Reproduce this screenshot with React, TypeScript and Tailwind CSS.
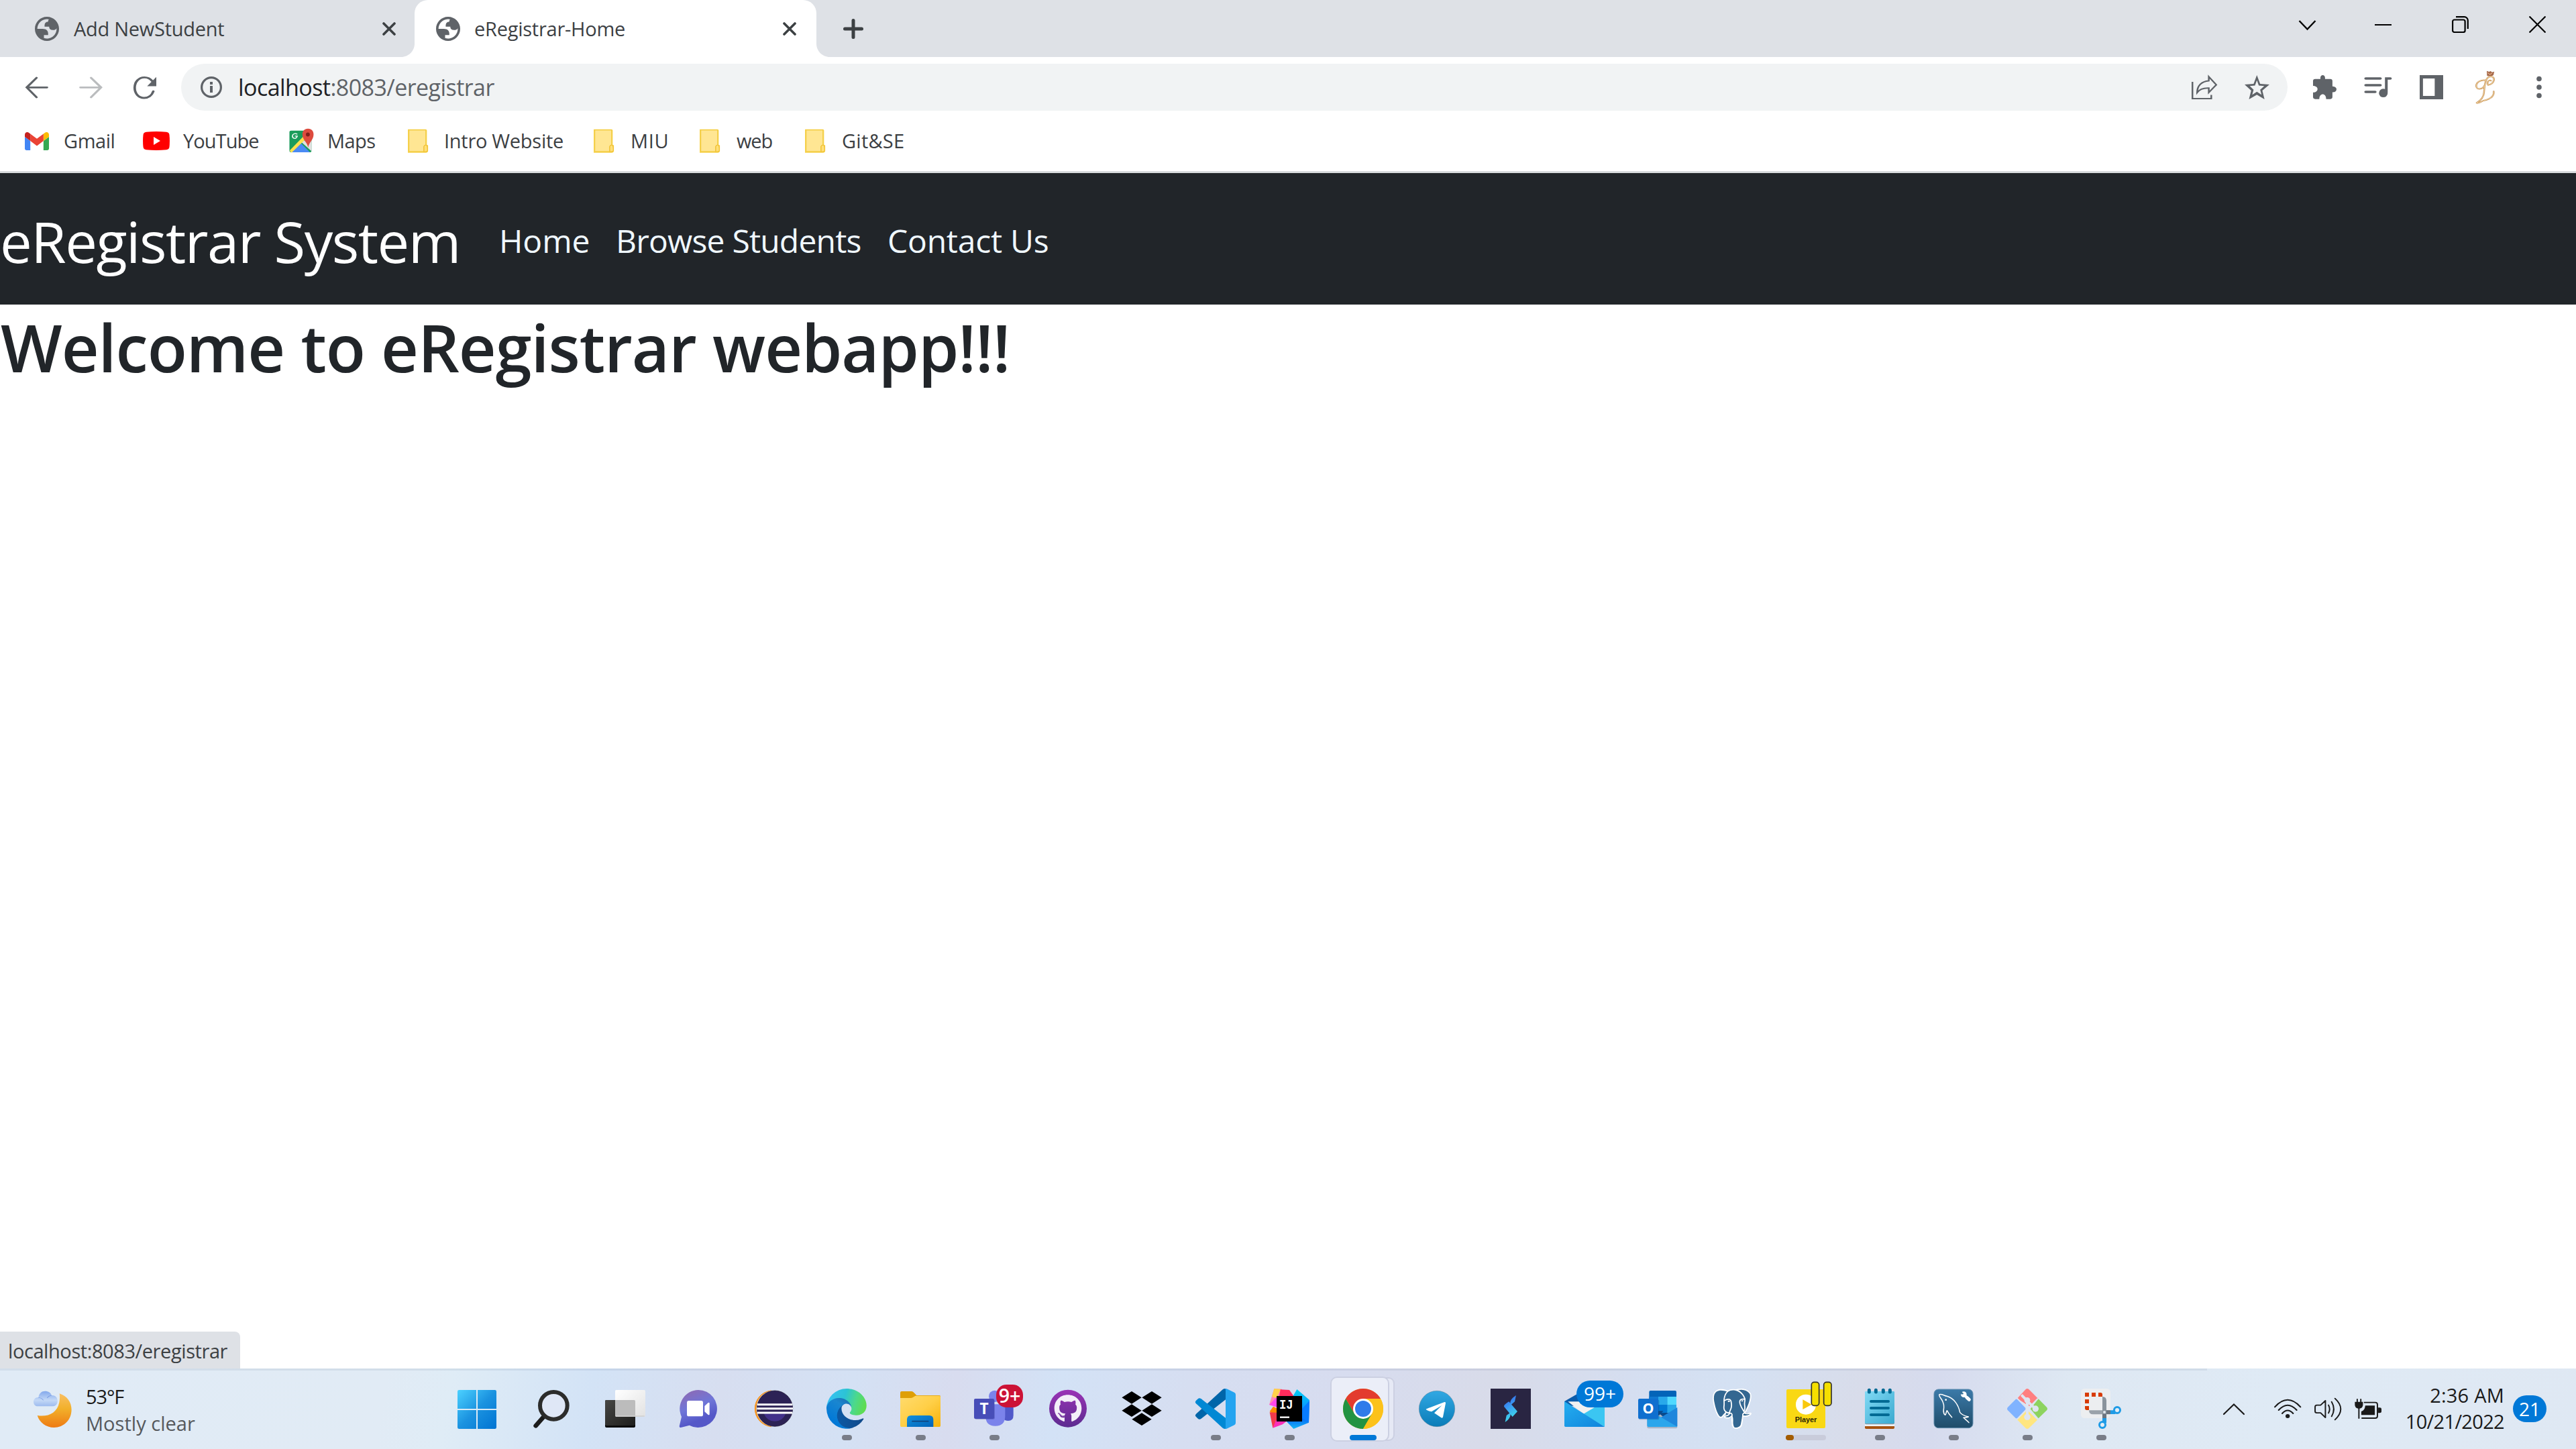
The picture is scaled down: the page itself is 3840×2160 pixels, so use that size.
import type { ReactNode } from 'react';
import { FaGithub } from 'react-icons/fa';
import { SiPostgresql } from 'react-icons/si';

type IconProps = { box: string; className: string; children: ReactNode };

/* Line icon stretched to the size its classes give */
function Icon({ box, className, children }: IconProps) {
  return (
    <svg viewBox={box} preserveAspectRatio="none" className={`shrink-0 overflow-visible ${className}`} fill="none">
      {children}
    </svg>
  );
}

function Globe() {
  return (
    <svg viewBox="2 2 20 20" className="size-9 shrink-0" fill="#5f6368" fillRule="evenodd">
      <path d="M12 2C6.48 2 2 6.48 2 12s4.48 10 10 10 10-4.48 10-10S17.52 2 12 2zM4 12h4.4c3.407.022 4.922 1.73 4.543 5.127H9.488v2.47a8.004 8.004 0 0 0 10.498-8.083C19.327 12.504 18.332 13 17 13c-2.137 0-3.206-.916-3.206-2.75h-3.748c-.274-2.728.683-4.092 2.87-4.092 0-.975.327-1.597.811-1.97A8.004 8.004 0 0 0 4 12z" />
    </svg>
  );
}

function CloseX() {
  return (
    <svg viewBox="0 0 20 20" className="size-5 shrink-0" fill="none" stroke="#3c4043" strokeWidth="3.6" strokeLinecap="round">
      <path d="M2 2l16 16M18 2L2 18" />
    </svg>
  );
}

function TabBar() {
  return (
    <div className="flex h-[85px] bg-[#dee1e6]">
      <div className="flex w-[618px] items-center pl-[52px]">
        <Globe />
        <span className="w-[482px] pb-px pl-[22px] text-[29px] leading-none tracking-[-0.27px] text-[#3c4043]">Add NewStudent</span>
        <CloseX />
      </div>
      <div className="relative flex w-[599px] items-center rounded-t-[20px] bg-white pl-[32px]">
        <svg viewBox="0 0 20 20" className="absolute bottom-0 -left-5 size-5" fill="#fff"><path d="M20 0v20H0C11 20 20 11 20 0z" /></svg>
        <svg viewBox="0 0 20 20" className="absolute -right-5 bottom-0 size-5" fill="#fff"><path d="M0 0v20h20C9 20 0 11 0 0z" /></svg>
        <Globe />
        <span className="w-[481px] pb-px pl-[21px] text-[29px] leading-none tracking-[-0.25px] text-[#3c4043]">eRegistrar-Home</span>
        <CloseX />
      </div>
      <div className="flex flex-1 items-center pl-[40px]">
        <svg viewBox="0 0 30 30" className="size-[30px]" fill="none" stroke="#3c4043" strokeWidth="5" strokeLinecap="round">
          <path d="M15 2.5v25M2.5 15h25" />
        </svg>
      </div>
      <div className="flex h-[73px] w-[413px] items-center text-black">
        <div className="w-[113px]">
          <Icon box="0 0 25 16" className="h-4 w-[25px]"><path d="M.5 2l12 12.5L24.500 2" stroke="currentColor" strokeWidth="2.4" /></Icon>
        </div>
        <div className="w-[115px]"><div className="h-[2px] w-[25px] bg-black" /></div>
        <div className="w-[115px]">
          <svg viewBox="0 0 25 25" className="size-[25px]" fill="none" stroke="currentColor" strokeWidth="2.2">
            <rect x="1.1" y="5.500" width="18.500" height="18.500" rx="2.500" />
            <path d="M6 1.200h12.500a5.300 5.300 0 0 1 5.300 5.300V19" />
          </svg>
        </div>
        <svg viewBox="0 0 25 25" className="size-[25px]" stroke="currentColor" strokeWidth="2.2"><path d="M.5.5l24 24M24.500.5l-24 24" /></svg>
      </div>
    </div>
  );
}

function Toolbar() {
  return (
    <div className="flex h-[90px] items-center pl-[38px]">
      <div className="w-[81px]">
        <Icon box="86 342 74 93" className="h-[31px] w-[33px]"><path d="M158 388H90M123 345L90 388l33 44" stroke="#5f6368" strokeWidth="8" strokeLinecap="round" /></Icon>
      </div>
      <div className="w-[80px]">
        <Icon box="266 342 73 93" className="h-[31px] w-[33px]"><path d="M268 388h67M303 345l33 43-33 44" stroke="#babcbe" strokeWidth="8" strokeLinecap="round" /></Icon>
      </div>
      <div className="w-[71px]">
        <Icon box="445 340 77 98" className="h-[33px] w-[34px]">
          <path d="M512 406c-5 18-17 29-31 29-19 0-32-20-32-45s13-46 33-46c11 0 20 6 26 16" stroke="#5f6368" strokeWidth="8.500" strokeLinecap="round" />
          <path d="M522 342v41h-31z" fill="#5f6368" />
        </Icon>
      </div>
      <div className="flex h-[70px] w-[3140px] items-center rounded-full bg-[#f1f3f4] pl-[29px]">
        <svg viewBox="0 0 32 32" className="size-8 shrink-0" fill="none">
          <circle cx="16" cy="16" r="14.400" stroke="#5f6368" strokeWidth="3.200" />
          <path d="M14 8h4v4h-4zM14 14h4v10h-4z" fill="#5f6368" />
        </svg>
        <span className="w-[2936px] pl-[24px] text-[34px] leading-none tracking-[-0.56px] text-[#5f6368]">
          <span className="text-[#202124]">localhost</span>:8083/eregistrar
        </span>
        <div className="w-[79px]">
          <Icon box="165 339 92 104" className="h-[35px] w-[38px]">
            <path d="M168 366v74h68v-16M227 343l27 36-27 34v-20c-20-1-33 5-42 20 0-30 16-50 42-52z" stroke="#5f6368" strokeWidth="6" />
          </Icon>
        </div>
        <Icon box="359 335 91 106" className="h-[36px] w-[37px]">
          <path fillRule="evenodd" d="M404 335l12 38 34 3-26 27 8 38-28-20-29 20 8-38-24-27 33-3zM404 358l-7 23-19 2 14 16-5 22 17-13 17 13-5-22 15-16-20-2z" fill="#5f6368" />
        </Icon>
      </div>
      <div className="flex items-center pl-[38px]">
        <div className="w-[77px]">
          <Icon box="608 335 86 106" className="h-[36px] w-[35px]">
            <path d="M616 352h19v-5c0-16 17-16 17 0v5h19q8 0 8 9v23c20-1 20 27 0 26v21q0 9-8 9h-15c0-28-25-28-25 0h-15q-8 0-8-9v-20c22 0 22-29 0-29v-21q0-9 8-9z" fill="#5f6368" />
          </Icon>
        </div>
        <div className="w-[82px]">
          <Icon box="796 345 98 90" className="h-[30px] w-[40px]">
            <path d="M800 351h53M800 381h53M800 411h34" stroke="#5f6368" strokeWidth="11" strokeLinecap="round" />
            <path d="M890 351h-15v62" stroke="#5f6368" strokeWidth="10" strokeLinecap="round" />
            <ellipse cx="864" cy="416" rx="16" ry="19" fill="#5f6368" />
          </Icon>
        </div>
        <div className="w-[83px]">
          <Icon box="998 336 86 108" className="h-[36px] w-[35px]">
            <path fillRule="evenodd" d="M998 336h86v108h-86zM1010 351v78h43v-78z" fill="#5f6368" />
          </Icon>
        </div>
        <div className="w-[91px]">
          <Icon box="1200 308 70 150" className="h-[50px] w-[29px]">
            <path d="M1241 310l8 4 6-3 5 5 8-3-3 16-9 6-14-3z" fill="#a5694a" />
            <path d="M1244 318l8 8 8-6" stroke="#e6b08c" strokeWidth="3" />
            <path d="M1246 373c22-4 29-37 10-38-21 0-23 40-25 72-1 20-12 35-26 46 2 4 12-3 24-10 26-7 39-20 37-41M1246 373c-7-12 3-25 10-19M1238 352c-17-4-35 8-35 25 0 20 24 17 30-2" stroke="#c39258" strokeWidth="6" strokeLinecap="round" />
            <path d="M1246 373c22-4 29-37 10-38-21 0-23 40-25 72-1 20-12 35-26 46 2 4 12-3 24-10 26-7 39-20 37-41M1246 373c-7-12 3-25 10-19M1238 352c-17-4-35 8-35 25 0 20 24 17 30-2" stroke="#f3d3a0" strokeWidth="2.500" strokeLinecap="round" />
          </Icon>
        </div>
        <svg viewBox="0 0 8 34" className="h-[34px] w-2" fill="#5f6368">
          <circle cx="4" cy="4.500" r="3.800" /><circle cx="4" cy="17" r="3.800" /><circle cx="4" cy="29.500" r="3.800" />
        </svg>
      </div>
    </div>
  );
}

function Folder() {
  return (
    <Icon box="0 0 70 108" className="h-9 w-[31px]">
      <path d="M0 2h60q4 0 4 5v66h4v26q0 7-6 8H0z" fill="#f7d24d" />
      <path d="M4 6h56v67l-6 6v22H4z" fill="#ffe693" stroke="#f0c93c" strokeWidth="2" />
      <path d="M54 102V79q3-8 8-6 5 2 4 26-2 4-12 3z" fill="#ffe07a" stroke="#f0c030" strokeWidth="3" />
    </Icon>
  );
}

const bookmarkText = 'pb-px whitespace-nowrap text-[29px] leading-none text-[#3c4043]';

function Bookmarks() {
  return (
    <div className="flex h-[70px] items-center pl-[37px]">
      <div className="flex w-[176px] items-center">
        <svg viewBox="52 42 88 66" className="h-[27px] w-9 shrink-0">
          <path fill="#4285f4" d="M58 108h14V74L52 59v43c0 3.320 2.690 6 6 6" />
          <path fill="#34a853" d="M120 108h14c3.320 0 6-2.690 6-6V59l-20 15" />
          <path fill="#fbbc04" d="M120 48v26l20-15v-8c0-7.420-8.470-11.650-14.400-7.200" />
          <path fill="#ea4335" d="M72 74V48l24 18 24-18v26L96 92" />
          <path fill="#c5221f" d="M52 51v8l20 15V48l-5.600-4.200c-5.940-4.450-14.400-.22-14.400 7.200" />
        </svg>
        <span className={`${bookmarkText} pl-[22px] tracking-[-0.44px]`}>Gmail</span>
      </div>
      <div className="flex w-[218px] items-center">
        <svg viewBox="0 0 40 28" className="h-7 w-10 shrink-0">
          <path d="M5 .8Q20-.6 35 .8q4 .4 4.500 4.200.9 9 0 18-.5 3.800-4.500 4.200-15 1.400-30 0Q1 26.800.5 23q-.9-9 0-18Q1 1.200 5 .8z" fill="#f00" />
          <path d="M16 8l10 6-10 6z" fill="#fff" />
        </svg>
        <span className={`${bookmarkText} pl-[20px] tracking-[-0.94px]`}>YouTube</span>
      </div>
      <div className="flex w-[177px] items-center">
        <Icon box="966 572 80 109" className="h-[36px] w-9">
          <path d="M973 580h62q5 0 5 7v85q0 6-5 6h-62q-6 0-6-6v-85q0-7 6-7z" fill="#1a9c5b" />
          <path d="M1003 628l37 45V620z" fill="#dfdfdf" />
          <path d="M972 678l31-44 32 44z" fill="#4a8af4" />
          <path d="M968 670l46-65 8 12-47 62h-3z" fill="#ffe04b" />
          <path d="M1029 657c-3-26-19-34-19-60 0-34 37-34 37 0 0 26-15 34-18 60z" fill="#dd4b3e" />
          <ellipse cx="1028" cy="598" rx="6.500" ry="9" fill="#821f1b" />
          <path d="M993 597c-7-7-16-2-16 8s12 17 16 0h-8" stroke="#fff" strokeWidth="3.500" />
        </Icon>
        <span className={`${bookmarkText} pl-[21px] tracking-[-0.55px]`}>Maps</span>
      </div>
      <div className="flex w-[277px] items-center"><Folder /><span className={`${bookmarkText} pl-[23px] tracking-[-0.28px]`}>Intro Website</span></div>
      <div className="flex w-[158px] items-center"><Folder /><span className={`${bookmarkText} pl-[24px] tracking-[0.6px]`}>MIU</span></div>
      <div className="flex w-[157px] items-center"><Folder /><span className={`${bookmarkText} pl-[24px] tracking-[-1.1px]`}>web</span></div>
      <div className="flex items-center"><Folder /><span className={`${bookmarkText} pl-[24px] tracking-[0.25px]`}>Git&amp;SE</span></div>
    </div>
  );
}

function Page() {
  return (
    <main className="flex flex-1 flex-col bg-white">
      <nav className="flex h-[196px] items-center bg-[#212529] whitespace-nowrap">
        <span className="w-[744px] pt-[6px] text-[85px] leading-none tracking-[-1.5px] text-white">eRegistrar System</span>
        <span className="w-[174px] pt-[6px] text-[48px] leading-none tracking-[-0.03px] text-[#f0f8ff]">Home</span>
        <span className="w-[405px] pt-[6px] text-[48px] leading-none tracking-[-0.8px] text-[#f0f8ff]">Browse Students</span>
        <span className="pt-[6px] text-[48px] leading-none tracking-[-0.24px] text-[#f0f8ff]">Contact Us</span>
      </nav>
      <h1 className="pt-[3px] pl-px text-[97px] leading-[120px] font-semibold tracking-[-1.03px] whitespace-nowrap text-[#212529]">Welcome to eRegistrar webapp!!!</h1>
      <div className="mt-auto flex h-[55px] w-[358px] items-center rounded-tr-[8px] bg-[#dee1e6] pt-[2px] pl-[12px] text-[29px] leading-none tracking-[-0.42px] text-[#3c4043]">
        localhost:8083/eregistrar
      </div>
    </main>
  );
}

/* Taskbar app icons, all drawn on a 180-unit square */
const art: Record<string, ReactNode> = {
  start: (
    <>
      <defs><linearGradient id="st" x1="0" y1="6" x2="174" y2="180" gradientUnits="userSpaceOnUse"><stop stopColor="#4cd1ff" /><stop offset=".5" stopColor="#1b93e0" /><stop offset="1" stopColor="#0073d2" /></linearGradient></defs>
      <path d="M7 6h77v84H0V13q0-7 7-7zM90 6h77q7 0 7 7v77H90zM0 96h84v84H7q-7 0-7-7zM90 96h84v77q0 7-7 7H90z" fill="url(#st)" />
    </>
  ),
  search: (
    <>
      <path d="M62 118L20 166" stroke="#1c1c1c" strokeWidth="20" strokeLinecap="round" />
      <circle cx="100" cy="76" r="61" fill="#dfe7f6" stroke="#2c2c2b" strokeWidth="18" />
    </>
  ),
  tasks: (
    <>
      <defs>
        <linearGradient id="tk" x1="0" y1="0" x2="1" y2="1"><stop stopColor="#474744" /><stop offset="1" stopColor="#1d1d1c" /></linearGradient>
        <linearGradient id="tw" x1="0" y1="0" x2="1" y2="1"><stop stopColor="#fff" /><stop offset="1" stopColor="#e2e2e2" /></linearGradient>
      </defs>
      <rect y="51" width="135" height="123" rx="6" fill="#050505" />
      <rect y="51" width="135" height="115" rx="6" fill="url(#tk)" />
      <rect x="45" y="6" width="135" height="119" rx="5" fill="url(#tw)" />
      <path d="M45 51h85q5 0 5 5v69H50q-5 0-5-5z" fill="#bcbcbc" />
      <path d="M48 123h128" stroke="#cfcfcf" strokeWidth="4" />
    </>
  ),
  chat: (
    <>
      <defs><linearGradient id="ct" x1="50" y1="10" x2="110" y2="160" gradientUnits="userSpaceOnUse"><stop stopColor="#8a6bb8" /><stop offset=".45" stopColor="#6f76d8" /><stop offset=".85" stopColor="#5558c8" /></linearGradient></defs>
      <path d="M87 6a84 84 0 1 1-40 158L8 174q-6 1-6-6l10-42A84 84 0 0 1 87 6z" fill="url(#ct)" />
      <rect x="36" y="54" width="72" height="70" rx="8" fill="#fff" />
      <path d="M115 78l15-14q7-4 7 3v46q0 8-7 3l-15-13z" fill="#fff" />
    </>
  ),
  eclipse: (
    <>
      <path d="M82 9a81 81 0 0 0 0 161A84 84 0 0 1 82 9z" fill="#f7941e" stroke="#f7941e" strokeWidth="3" />
      <path d="M82 9a81 81 0 0 0 0 161z" fill="#f7941e" />
      <circle cx="97" cy="89" r="81" fill="#f3eef4" />
      <circle cx="99" cy="89" r="80" fill="#2c2255" stroke="#120d26" strokeWidth="2" />
      <path d="M50 112a52 52 0 0 0 98 0z" fill="#43318a" />
      <path d="M21 71h157M19 89h161M21 108h157" stroke="#fff" strokeWidth="9" />
    </>
  ),
  edge: (
    <>
      <defs>
        <linearGradient id="e1" x1="63" y1="178" x2="241" y2="178" gradientUnits="userSpaceOnUse"><stop stopColor="#0c59a4" /><stop offset="1" stopColor="#114a8b" /></linearGradient>
        <linearGradient id="e2" x1="150" y1="80" x2="46" y2="222" gradientUnits="userSpaceOnUse"><stop stopColor="#1b6fb3" /><stop offset=".3" stopColor="#1a86d0" /><stop offset="1" stopColor="#0078d7" /></linearGradient>
        <linearGradient id="e3" x1="20" y1="60" x2="250" y2="130" gradientUnits="userSpaceOnUse"><stop stopColor="#35c1f1" /><stop offset=".4" stopColor="#2cc3d5" /><stop offset=".7" stopColor="#4cd98b" /><stop offset="1" stopColor="#5fdc4e" /></linearGradient>
      </defs>
      <g transform="scale(.7) translate(-4.600 -5)">
        <path fill="url(#e1)" d="M235.680 195.460a93.730 93.730 0 0 1-10.540 4.710 101.870 101.870 0 0 1-35.900 6.460c-47.320 0-88.540-32.550-88.540-74.320A31.480 31.480 0 0 1 117.130 105c-42.800 1.800-53.800 46.400-53.800 72.530 0 73.880 68.090 81.370 82.760 81.370 7.910 0 19.840-2.300 27-4.560l1.310-.44a128.340 128.340 0 0 0 66.600-52.800 4 4 0 0 0-5.320-5.640z" />
        <path fill="url(#e2)" d="M110.340 246.340A79.200 79.200 0 0 1 87.600 225a80.720 80.720 0 0 1 29.530-120c3.120-1.470 8.450-4.130 15.540-4a32.350 32.350 0 0 1 25.690 13 31.880 31.880 0 0 1 6.360 18.660c0-.21 24.460-79.600-80-79.600-43.900 0-80 41.660-80 78.210a130.150 130.150 0 0 0 12.110 56 128 128 0 0 0 156.380 67.110 75.550 75.550 0 0 1-62.780-8z" />
        <path fill="url(#e3)" d="M156.940 153.760c-.81 1.050-3.300 2.500-3.300 5.660 0 2.610 1.700 5.120 4.720 7.230 14.380 10 41.490 8.680 41.560 8.680a59.560 59.560 0 0 0 30.270-8.350A61.380 61.380 0 0 0 260.520 114c.26-22.410-8-37.310-11.340-43.910C227.950 28.760 182.350 5 132.680 5a128 128 0 0 0-128 126.200c.48-36.540 36.800-66.050 80-66.050 3.500 0 23.460.34 42 10.070 16.340 8.580 24.900 18.940 30.850 29.210 6.180 10.670 7.280 24.150 7.280 29.520s-2.740 13.330-7.870 19.810z" />
      </g>
    </>
  ),
  explorer: (
    <>
      <defs>
        <linearGradient id="x1" x1="0" y1="0" x2="1" y2="1"><stop stopColor="#ffdb6e" /><stop offset=".5" stopColor="#ffcf47" /><stop offset="1" stopColor="#f7b20a" /></linearGradient>
        <linearGradient id="x2" x1="0" y1="0" x2="1" y2="1"><stop stopColor="#1191dd" /><stop offset="1" stopColor="#0362b8" /></linearGradient>
      </defs>
      <path d="M0 18q0-6 6-6h43q6 0 10 4l14 14h102q5 0 5 5v20H0z" fill="#df9f06" />
      <path d="M0 42h46q7 0 12-4l10-6h107q5 0 5 5v129q0 5-5 5H5q-5 0-5-5z" fill="url(#x1)" />
      <path d="M30 171v-33q0-18 18-18h82q18 0 18 18v33z" fill="url(#x2)" />
      <path d="M54 146h71" stroke="#10457f" strokeWidth="5" strokeLinecap="round" />
    </>
  ),
  teams: (
    <>
      <circle cx="92" cy="34" r="26" fill="#7b83eb" />
      <path d="M128 70h48v50q0 24-24 24t-24-24z" fill="#5059c9" />
      <path d="M52 70h87v53q0 44-44 44t-43-44z" fill="#7b83eb" />
      <rect x="3" y="48" width="90" height="90" rx="8" fill="#3c3f9c" opacity=".35" />
      <rect y="45" width="90" height="90" rx="6" fill="#474db8" />
      <text x="45" y="113" textAnchor="middle" fontSize="68" fontWeight="700" fill="#fff">T</text>
      <rect x="99" y="-18" width="120" height="102" rx="46" fill="#cc1236" />
      <text x="159" y="64" textAnchor="middle" fontSize="84" fontWeight="600" fill="#fff" textLength="98" lengthAdjust="spacingAndGlyphs">9+</text>
    </>
  ),
  github: (
    <>
      <defs><linearGradient id="gh" x1="0" y1="0" x2="0" y2="1"><stop stopColor="#9a33b5" /><stop offset="1" stopColor="#5c2b90" /></linearGradient></defs>
      <circle cx="90" cy="89" r="84" fill="url(#gh)" />
      <FaGithub x="27" y="26" size={126} color="#f3eef8" />
    </>
  ),
  dropbox: <path d="M1 40l44-28 44 28-44 28zM91 40l44-28 44 28-44 28zM1 98l44-28 44 28-44 28zM91 98l44-28 44 28-44 28zM46 137l44-28 44 28-44 28z" fill="#000" />,
  vscode: (
    <>
      <path d="M135 0v49L26 134q-8 6-14 1l-9-9q-7-6 0-13L122 4q6-5 13-4z" fill="#0065a9" />
      <path d="M135 180v-49L26 46q-8-6-14-1l-9 8q-7 7 0 14l119 109q6 5 13 4z" fill="#0088d4" />
      <path d="M132 180q3-1 3-6V6q0-5-3-6 4-1 8 1l34 16q6 3 6 10v126q0 7-6 10l-34 16q-4 2-8 1z" fill="#24a4f0" />
    </>
  ),
  idea: (
    <>
      <defs><linearGradient id="ib" x1="0" y1="0" x2="0" y2="1"><stop stopColor="#00d0f5" /><stop offset=".45" stopColor="#0a9bff" /><stop offset=".75" stopColor="#066cf5" /><stop offset="1" stopColor="#18b8f5" /></linearGradient></defs>
      <path d="M22 0l35 2-16 76L0 72z" fill="#ff8bb4" />
      <path d="M22 0l30 2-20 40-20-6z" fill="#ffd24a" />
      <path d="M0 72l36-36 6 50z" fill="#ff45ed" />
      <path d="M50 4l40 2 24 34H44z" fill="#ff2b5c" />
      <path d="M2 102l16-22 20 10v40z" fill="#ff8a00" />
      <path d="M2 106l36 2v32l-22 36z" fill="#f43a4a" />
      <path d="M16 176l14-34 50 2-20 16z" fill="#fb2fb8" />
      <path d="M124 3l56 48-3 101-68 28-32-34 66-70-38-40z" fill="url(#ib)" />
      <path d="M142 96l38-42-3 98-40-26z" fill="#087cff" />
      <rect x="33" y="33" width="114" height="114" fill="#000" />
      <text x="45" y="89" fontFamily='"Liberation Mono"' fontSize="58" fontWeight="700" fill="#fff" textLength="62" lengthAdjust="spacingAndGlyphs">IJ</text>
      <path d="M48 128h42" stroke="#fff" strokeWidth="7" />
    </>
  ),
  chrome: (
    <>
      <circle cx="90" cy="90" r="90" fill="#fbc116" />
      <path d="M12 45a90 90 0 0 1 156 0H90L51 112z" fill="#e33b2e" />
      <path d="M12 45l39 67 39 23 39-22-39 67A90 90 0 0 1 12 45z" fill="#229342" />
      <path d="M90 45h78a90 90 0 0 1-78 135l39-67z" fill="#fcc21b" />
      <circle cx="90" cy="90" r="45" fill="#fff" /><circle cx="90" cy="90" r="36" fill="#2f7bea" />
    </>
  ),
  telegram: (
    <>
      <defs><linearGradient id="tg" x1="0" y1="0" x2="0" y2="1"><stop stopColor="#31a8e3" /><stop offset="1" stopColor="#0a7cb8" /></linearGradient></defs>
      <circle cx="90" cy="90" r="80" fill="url(#tg)" stroke="#5d7f93" strokeWidth="1.500" />
      <path d="M41 92q2-2 83-32 6-1 5 5l-12 62q-2 7-8 3L78 109l34-34-46 28q-24-6-25-11z" fill="#fff" />
    </>
  ),
  bolt: (
    <>
      <defs><linearGradient id="bl" x1="60" y1="50" x2="115" y2="130" gradientUnits="userSpaceOnUse"><stop stopColor="#3569e8" /><stop offset=".4" stopColor="#3b9cf2" /><stop offset="1" stopColor="#3fe0ea" /></linearGradient></defs>
      <path d="M0 0h180v180H0z" fill="#292542" />
      <path d="M114 30l-6 28-16 14-4-6q-2-19 26-36zM82 58l38 44-22 24-38-46q-2-8 22-22zM65 150l6-30 15-11 3 8q-2 18-24 33z" fill="url(#bl)" />
    </>
  ),
  mail: (
    <>
      <defs><linearGradient id="ml" x1="0" y1="0" x2="1" y2="1"><stop stopColor="#25aef0" /><stop offset="1" stopColor="#0f84dc" /></linearGradient></defs>
      <path d="M0 57L90 5l90 52v20H0z" fill="#0b5cab" />
      <path d="M16 58h150v30l-74 30z" fill="#f1f1f1" />
      <path d="M180 57v114L84 114z" fill="#3bc6f2" />
      <path d="M0 57l180 114H5q-5 0-5-5z" fill="url(#ml)" />
      <rect x="54" y="-36" width="210" height="120" rx="60" fill="#0078d7" />
      <text x="159" y="53" textAnchor="middle" fontSize="82" fill="#fff" textLength="144" lengthAdjust="spacingAndGlyphs">99+</text>
    </>
  ),
  outlook: (
    <>
      <rect x="40" y="90" width="135" height="88" rx="6" fill="#26384f" opacity=".25" />
      <path d="M49 15q0-6 6-6h110q6 0 6 6v90H49z" fill="#0364b8" />
      <path d="M49 36h41v36H49z" fill="#0f78d0" /><path d="M90 36h40v36H90z" fill="#28a8ea" /><path d="M130 36h41v36h-41z" fill="#50d9ff" />
      <path d="M90 72h40v36H90z" fill="#0078d4" /><path d="M130 72h41v36h-41z" fill="#28a8ea" />
      <path d="M49 100h64l-20 20zM90 108h55l-30 20z" fill="#0a4a8c" />
      <path d="M175 84v82q0 5-5 5h-60L100 130z" fill="#1e86dc" />
      <path d="M40 92l135 78q-2 1-6 1H46q-6 0-6-6z" fill="#2ba6ec" />
      <rect x="2" y="49" width="92" height="90" rx="8" fill="#0b3c73" opacity=".3" />
      <rect y="45" width="90" height="90" rx="6" fill="#0f6fcf" />
      <text x="45" y="112" textAnchor="middle" fontSize="64" fontWeight="700" fill="#fff">O</text>
    </>
  ),
  postgres: (
    <>
      <path d="M5 42C5 15 15 6 40 5c15 0 26 3 32 6 8-6 18-8 25-7 8 0 13 2 16 3 12-6 27-5 37-1 15 6 22 14 23 26 3 23-13 58-27 76l14 1 14 1c-2 10-19 16-36 14l-5 36c-3 12-13 17-27 18-13-2-17-13-17-28l-1-22c-8 5-30 5-34-2q2-6 9-9l-1-11-15 18q-7 8-14 0C18 100 5 70 5 42z" fill="#336791" />
      <SiPostgresql x="0" y="0" size={180} color="#fff" />
    </>
  ),
  player: (
    <>
      <rect x="3" y="3" width="174" height="174" rx="6" fill="#f9d814" />
      <circle cx="90" cy="71" r="45" fill="#fff" />
      <path d="M76 49l40 22-40 22z" fill="#f9c80e" />
      <text x="90" y="151" textAnchor="middle" fontFamily='"Liberation Sans"' fontSize="34" fontWeight="700" fill="#2a2408" textLength="98" lengthAdjust="spacingAndGlyphs">Player</text>
      <rect x="115" y="-29" width="34" height="105" rx="12" fill="#f5df00" stroke="#33322b" strokeWidth="5" />
      <rect x="170" y="-29" width="34" height="105" rx="12" fill="#f5df00" stroke="#33322b" strokeWidth="5" />
    </>
  ),
  notepad: (
    <>
      <defs><linearGradient id="np" x1="0" y1="0" x2="1" y2="1"><stop stopColor="#82daf5" /><stop offset="1" stopColor="#3aa9cf" /></linearGradient></defs>
      <path d="M24 150h132v30H30q-6 0-6-5z" fill="#eef3f7" />
      <path d="M24 168h132v7q0 5-5 5H29q-5 0-5-5z" fill="#a6520f" />
      <path d="M24 150h132v6q-2 4-6 4H30q-5 0-6-4z" fill="#8a9aa6" />
      <rect x="24" y="12" width="132" height="144" rx="4" fill="url(#np)" />
      <path d="M51 57h78M51 87h78M51 117h78" stroke="#006a94" strokeWidth="12" strokeLinecap="round" />
      <path d="M43 7v8M73 7v8M106 7v8M136 7v8" stroke="#006a94" strokeWidth="15" strokeLinecap="round" />
    </>
  ),
  mysql: (
    <>
      <defs><linearGradient id="my" x1="0" y1="0" x2="0" y2="1"><stop stopColor="#3b7aa9" /><stop offset="1" stopColor="#1f4c69" /></linearGradient></defs>
      <rect x="3" y="3" width="174" height="173" rx="20" fill="url(#my)" stroke="#6590b0" strokeWidth="3" />
      <path d="M27 26c14-2 22 6 34 8 34 10 52 42 58 72 6 8 14 14 38 20-10 4-16 2-22 4 8 8 18 14 24 22M27 26c-4 8 8 16 14 30 4 10 8 16 6 28-2 14-4 28 6 34 4-2 4-14 8-20 6 12 12 20 22 30" fill="none" stroke="#fff" strokeWidth="4.500" strokeLinejoin="round" strokeLinecap="round" />
      <circle cx="56" cy="50" r="4" fill="#fff" />
      <path d="M134 25l24 22" stroke="#fff" strokeWidth="12" /><path d="M150 40l10 9" stroke="#fff" strokeWidth="15" strokeLinecap="round" />
      <circle cx="136" cy="26" r="13" fill="#fff" /><path d="M122 8l14 16-10 2-10-10z" fill="#387299" />
    </>
  ),
  git: (
    <>
      <path d="M83 3q7-6 14 0l41 41-36 36-57-36z" fill="#ff7f80" />
      <path d="M3 83l35-35q3-3 7 0l37 38v8l-37 38q-4 2-7 0L3 97q-6-7 0-14z" fill="#80b3ff" />
      <path d="M140 46l37 37q6 7 0 14l-37 36-36-42z" fill="#8dd35f" />
      <path d="M90 95l45 45-38 37q-7 6-14 0l-38-38z" fill="#ffe680" />
      <path d="M44 42l92 94M137 44l-93 94" stroke="#dee5f1" strokeWidth="5" />
      <path d="M64 28l26 27v70M90 56l36 34" fill="none" stroke="#dee5f1" strokeWidth="12" />
      <circle cx="90" cy="52" r="13" fill="#dee5f1" /><circle cx="90" cy="127" r="14" fill="#dee5f1" /><circle cx="127" cy="90" r="14" fill="#dee5f1" />
    </>
  ),
  snip: (
    <>
      <rect width="132" height="132" rx="16" fill="#eceef0" />
      <path d="M18 18h18v18H18zM48 18h18v18H48zM78 18h10q8 0 8 8v10H78zM18 48h18v18H18zM18 78h18v18H26q-8 0-8-8z" fill="#d83b01" />
      <path d="M36 97h96v18H54q-18 0-18-18z" fill="#9aa2aa" />
      <path d="M96 36q18 0 18 18v78H96z" fill="#8a939c" />
      <path d="M114 97h18v17h-18zM96 114h18v18H96z" fill="#6c757f" />
      <circle cx="105" cy="105" r="6" fill="#e4e8ec" />
      <path d="M132 97h22v17h-22zM96 132h18v22H96z" fill="#1e9be6" />
      <circle cx="162" cy="96" r="13.500" fill="#e3edf6" stroke="#1e9be6" strokeWidth="9" />
      <circle cx="96" cy="162" r="13.500" fill="#e3edf6" stroke="#1e9be6" strokeWidth="9" />
    </>
  ),
};

const apps: { name: string; running?: boolean }[] = [
  { name: 'start' }, { name: 'search' }, { name: 'tasks' }, { name: 'chat' }, { name: 'eclipse' },
  { name: 'edge', running: true }, { name: 'explorer', running: true }, { name: 'teams', running: true },
  { name: 'github' }, { name: 'dropbox' }, { name: 'vscode', running: true }, { name: 'idea', running: true },
  { name: 'chrome' }, { name: 'telegram' }, { name: 'bolt' }, { name: 'mail' }, { name: 'outlook' },
  { name: 'postgres' }, { name: 'player' }, { name: 'notepad', running: true }, { name: 'mysql', running: true },
  { name: 'git', running: true }, { name: 'snip', running: true },
];

function TaskbarApp({ name, running }: { name: string; running?: boolean }) {
  return (
    <div className="relative flex h-[120px] w-[110px] shrink-0 items-center justify-center">
      {name === 'chrome' && (
        <>
          <div className="absolute top-[13px] left-[10px] h-[95px] w-[92px] rounded-[9px] border-2 border-[#ccd0e2] bg-[#e6e9f5]" />
          <div className="absolute top-[12px] left-[6px] h-[97px] w-[88px] rounded-[10px] border-2 border-[#ccd0e2] bg-[#ebeef8]" />
          <div className="absolute top-[99px] left-[35px] h-2 w-10 rounded-full bg-[#0078d7]" />
        </>
      )}
      {name === 'player' && (
        <div className="absolute top-[99px] left-[25px] h-2 w-[60px] rounded-full bg-[#c9ccdb]">
          <div className="h-2 w-3 rounded-full bg-[#a35c00]" />
        </div>
      )}
      <svg viewBox="0 0 180 180" className="relative size-[60px] overflow-visible" fill="none">
        {art[name]}
      </svg>
      {running && <div className="absolute top-[99px] left-[48px] h-2 w-[15px] rounded-full bg-[#797d88]" />}
    </div>
  );
}

function Weather() {
  return (
    <div className="flex w-[657px] items-center pl-[50px]">
      <Icon box="122 303 140 165" className="h-[55px] w-[57px]">
        <defs>
          <linearGradient id="mo" x1="0" y1="0" x2="0" y2="1"><stop stopColor="#f9bf62" /><stop offset=".45" stopColor="#f2b02a" /><stop offset="1" stopColor="#ee7a14" /></linearGradient>
          <linearGradient id="cl" x1="0" y1="0" x2="0" y2="1"><stop stopColor="#83a9ec" /><stop offset=".6" stopColor="#c3d8f6" /><stop offset="1" stopColor="#9dbbef" /></linearGradient>
        </defs>
        <path d="M217 316c28 12 44 38 44 72 0 46-28 80-64 80-30 0-54-24-61-54 40 8 72-12 80-58 2-12 3-26 1-40z" fill="url(#mo)" />
        <path d="M138 373c-10 0-16-9-16-20 0-12 8-21 18-20 2-18 12-28 24-28s22 7 24 19c14-2 22 11 22 25 0 13-6 24-16 24z" fill="url(#cl)" />
        <path d="M140 334q12 1 18 12M172 336q4-9 16-12" stroke="#7d9fe6" strokeWidth="2.500" />
      </Icon>
      <div className="flex flex-col gap-[11px] pt-[2px] pl-[21px] text-[29px] leading-none">
        <span className="tracking-[-1.1px] text-[#1a1a1a]">53°F</span>
        <span className="tracking-[0.03px] text-[#56595d]">Mostly clear</span>
      </div>
    </div>
  );
}

function Tray() {
  return (
    <div className="flex flex-1 items-center pl-[127px]">
      <div className="w-[76px]">
        <Icon box="0 0 32 17" className="h-[17px] w-8"><path d="M1 16L16 1.500 31 16" stroke="#1a1a1a" strokeWidth="2.200" strokeLinecap="round" /></Icon>
      </div>
      <div className="w-[60px]">
        <Icon box="307 165 113 84" className="h-7 w-10">
          <path d="M310 199q54-63 108 0M326 213q38-44 76 0M341 228q23-27 46 0" stroke="#1a1a1a" strokeWidth="6" strokeLinecap="round" />
          <circle cx="364" cy="240" r="9" fill="#1a1a1a" />
        </Icon>
      </div>
      <div className="w-[60px]">
        <Icon box="476 160 112 100" className="h-[33px] w-10">
          <path d="M522 172v76l-20-21h-16q-7 0-7-7v-20q0-8 7-8h16zM535 192q9 18 0 36M548 177q18 33 0 66M562 162q48 48 0 96" stroke="#1a1a1a" strokeWidth="5.500" strokeLinejoin="round" strokeLinecap="round" />
        </Icon>
      </div>
      <div className="w-[64px]">
        <Icon box="643 157 113 93" className="h-[31px] w-10">
          <path d="M682 174h48q9 0 9 9v52q0 9-9 9h-58" stroke="#1a1a1a" strokeWidth="5.500" />
          <path d="M688 188h40v42h-57v-16q14-2 17-26zM742 197h7q7 0 7 6v12q0 6-7 6h-7zM644 171h34v14q0 15-17 17-17-2-17-17z" fill="#1a1a1a" />
          <path d="M654 160v12M669 160v12M661 198v46" stroke="#1a1a1a" strokeWidth="5.500" strokeLinecap="round" />
        </Icon>
      </div>
      <div className="flex w-[159px] flex-col items-end gap-[10px] pb-[2px] text-[29px] leading-none text-[#1a1a1a]">
        <span className="tracking-[0.21px]">2:36 AM</span>
        <span className="tracking-[-0.67px]">10/21/2022</span>
      </div>
      <div className="ml-[13px] flex h-10 w-[50px] items-center justify-center rounded-[20px] bg-[#0078d7] text-[28px] leading-none text-white">21</div>
    </div>
  );
}

export default function App() {
  return (
    <div className="flex h-[2160px] w-[3840px] flex-col overflow-hidden bg-white font-['Open_Sans',sans-serif]">
      <header>
        <TabBar />
        <Toolbar />
        <Bookmarks />
        <div className="mt-[10px] h-[3px] bg-[#d9dcde]" />
      </header>
      <Page />
      <footer className="relative h-[120px] bg-[linear-gradient(100deg,#e0ebf6_0%,#e1ebf5_15%,#dfecf6_17.500%,#d3e3f6_23%,#d7def0_28%,#d4e1f4_33%,#d8dcef_37%,#d3e2f6_41%,#d6def1_46%,#d7dcef_52%,#d8dbe9_58%,#d5def0_63%,#d4e1f3_67%,#d8dcea_72%,#d6dbee_75%,#dee8f3_80%,#dfeaf5_88%,#dfe8f3_100%)]">
        <div className="absolute top-0 left-0 h-[3px] w-[3290px] bg-[#4a6484]/10" />
        <div className="flex w-full">
          <Weather />
          {apps.map((a) => <TaskbarApp key={a.name} {...a} />)}
          <Tray />
        </div>
      </footer>
    </div>
  );
}
